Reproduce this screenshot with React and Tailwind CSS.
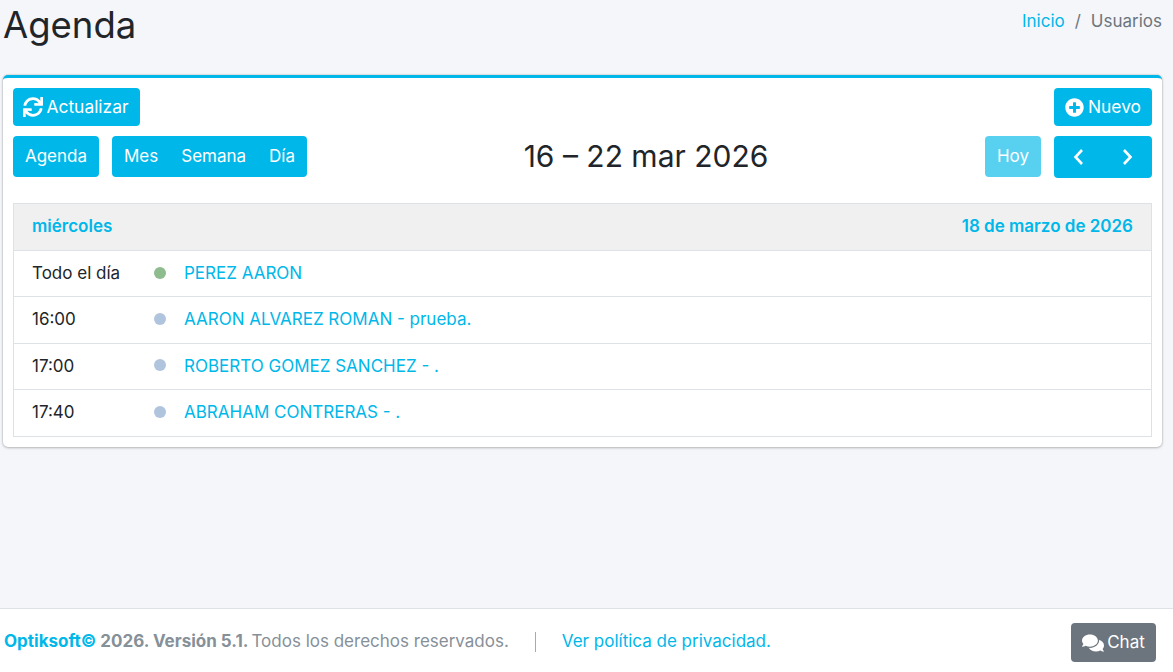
import { FaSync, FaPlusCircle, FaComments } from 'react-icons/fa';

const events = [
    { time: 'Todo el día', title: 'PEREZ AARON', dot: 'bg-[#8fbc8f]' },
    { time: '16:00', title: 'AARON ALVAREZ ROMAN - prueba.', dot: 'bg-[#b0c4de]' },
    { time: '17:00', title: 'ROBERTO GOMEZ SANCHEZ - .', dot: 'bg-[#b0c4de]' },
    { time: '17:40', title: 'ABRAHAM CONTRERAS - .', dot: 'bg-[#b0c4de]' },
];

const btn = 'flex items-center bg-[#00b7e9] text-white leading-6 rounded-[4px]';

export default function App() {
    return (
        <div className="min-h-[672px] flex flex-col bg-[#f4f6f9] text-[#212529] font-['Inter',sans-serif]">
            <div className="flex-1 px-[3px]">
                <header className="flex justify-between items-start h-[75px]">
                    <h1 className="text-[36.5px] leading-[50px]">Agenda</h1>
                    <nav className="flex text-[17px] leading-6 pt-[9px] pr-[8px]">
                        <span className="text-[#00b7e9]">Inicio</span>
                        <span className="text-[#6c757d] px-[10px]">/</span>
                        <span className="text-[#6c757d]">Usuarios</span>
                    </nav>
                </header>

                <section className="w-[1159px] h-[372px] bg-white border-t-[3px] border-[#00b7e9] rounded-[5px] shadow-[0_0_2px_rgba(0,0,0,0.25),0_1px_3px_rgba(0,0,0,0.2)] px-[10px] pt-[10px]">
                    <div className="flex justify-between">
                        <button className={`${btn} justify-center h-[38px] w-[127px] gap-[3px] pr-[1px] text-[17.4px]`}>
                            <FaSync className="text-[20px]" /> Actualizar
                        </button>
                        <button className={`${btn} justify-center h-[38px] w-[98px] gap-[4px] text-[17.4px]`}>
                            <FaPlusCircle className="text-[19px]" /> Nuevo
                        </button>
                    </div>

                    <div className="flex items-start justify-between mt-[10px]">
                        <div className="flex gap-[13px] w-[294px]">
                            <button className={`${btn} justify-center h-[41px] w-[86px] pb-[1px] text-[17px]`}>Agenda</button>
                            <div className={`${btn} justify-between h-[41px] w-[195px] px-[12px] pb-[1px] text-[17px]`}>
                                <span>Mes</span>
                                <span>Semana</span>
                                <span>Día</span>
                            </div>
                        </div>
                        <h2 className="text-[30px] leading-[41px]">16 – 22 mar 2026</h2>
                        <div className="flex gap-[13px] w-[167px]">
                            <button className={`${btn} justify-center h-[41px] w-[56px] pb-[1px] text-[17px] opacity-65`}>Hoy</button>
                            <div className={`${btn} justify-between h-[42px] w-[98px] px-[17px]`}>
                                <svg width="16" height="18" viewBox="0 0 16 18" fill="none" stroke="white" strokeWidth="2.6"><path d="M11 2 L4.5 9 L11 16" /></svg>
                                <svg width="16" height="18" viewBox="0 0 16 18" fill="none" stroke="white" strokeWidth="2.6"><path d="M5 2 L11.5 9 L5 16" /></svg>
                            </div>
                        </div>
                    </div>

                    <div className="mt-[25px] border border-[#dee2e6]">
                        <div className="flex justify-between items-center h-[46px] px-[18px] bg-[#f0f0f0] text-[#00b7e9] text-[17px] font-semibold">
                            <span>miércoles</span>
                            <span>18 de marzo de 2026</span>
                        </div>
                        {events.map((ev) => (
                            <div key={ev.title} className="flex items-center h-[46.4px] px-[18px] border-t border-[#dee2e6] text-[17px]">
                                <span className="w-[122px]">{ev.time}</span>
                                <span className={`w-[12px] h-[12px] mb-[2px] rounded-full ${ev.dot}`}></span>
                                <span className="ml-[18px] text-[#00b7e9]">{ev.title}</span>
                            </div>
                        ))}
                    </div>
                </section>
            </div>

            <footer className="h-[64px] shrink-0 bg-white border-t border-[#dee2e6] flex items-center justify-between pl-[4px] pr-[17px] text-[17px] text-[#869099]">
                <div className="flex items-center mt-[2px]">
                    <strong className="font-bold"><span className="text-[#00b7e9]">Optiksoft©</span> 2026. Versión 5.1.</strong>
                    <span className="ml-[3px]">Todos los derechos reservados.</span>
                    <span className="w-px h-[20px] bg-[#b9a795] ml-[26px]"></span>
                    <span className="ml-[26px] text-[#00b7e9]">Ver política de privacidad.</span>
                </div>
                <button className="flex items-center justify-center gap-[3px] w-[85px] h-[39px] mt-[4px] bg-[#6c757d] text-white text-[17px] rounded-[4px]">
                    <FaComments className="text-[22px]" /> Chat
                </button>
            </footer>
        </div>
    );
}
